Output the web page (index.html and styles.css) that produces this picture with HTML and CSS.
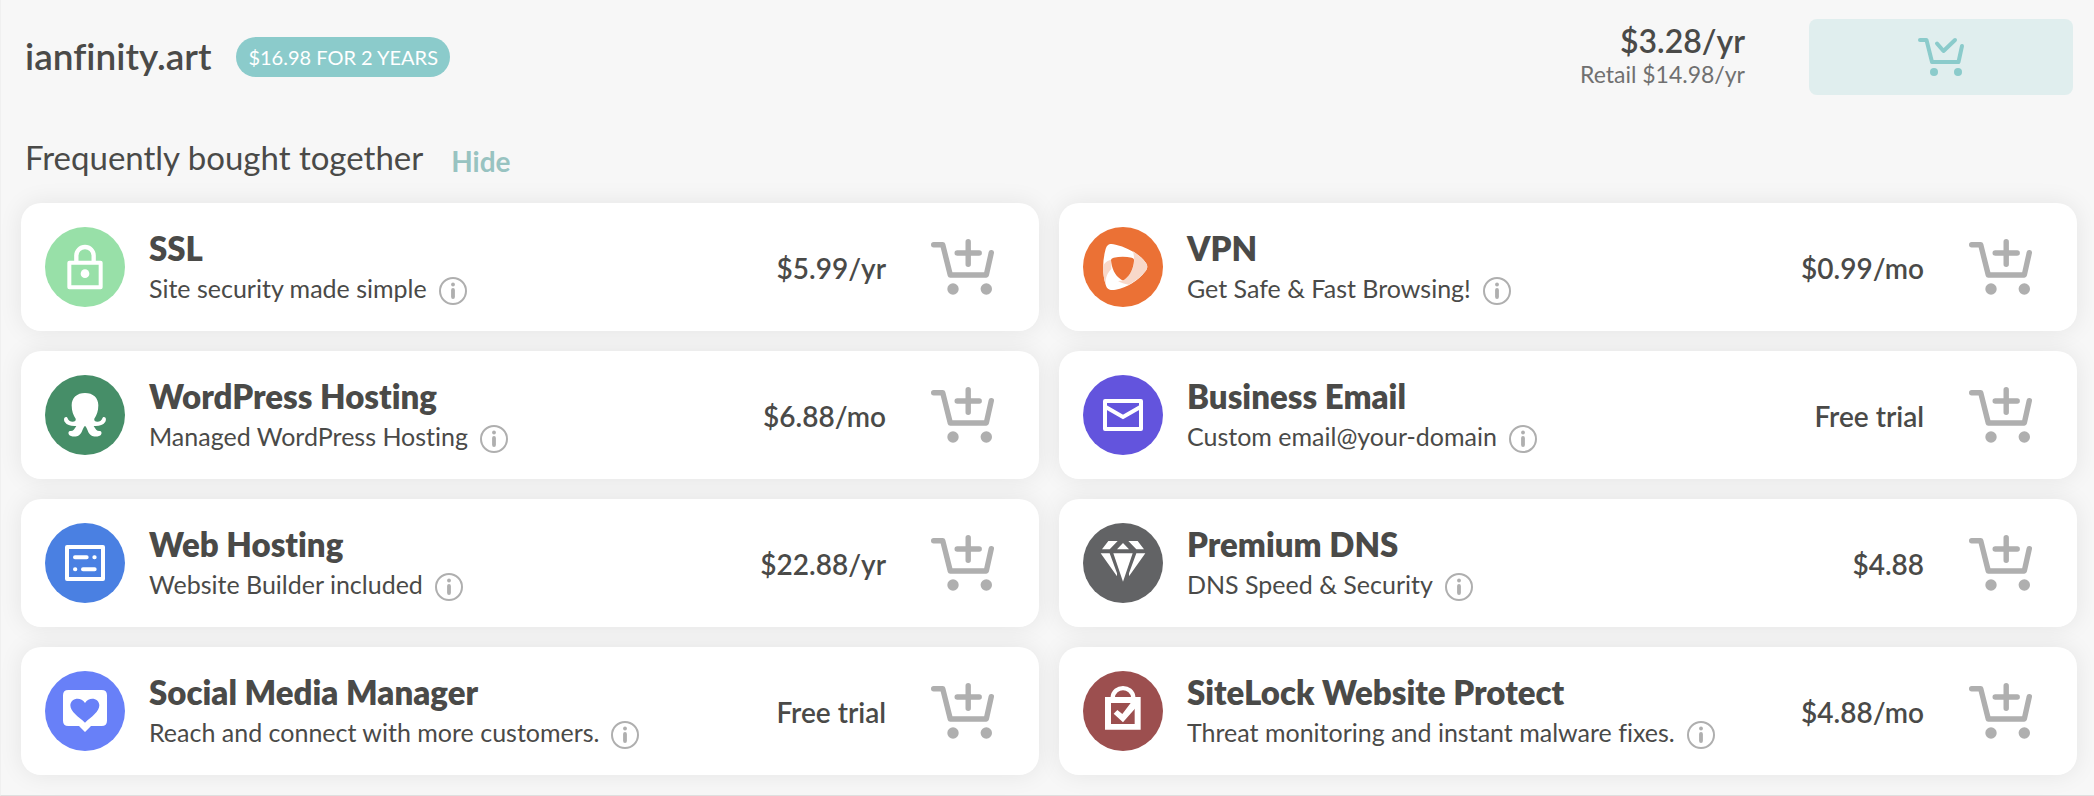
FILE: index.html
```
<!DOCTYPE html>
<html lang="en">
<head>
    <meta charset="UTF-8">
    <meta name="viewport" content="width=device-width, initial-scale=1.0">
    <title>ianfinity.art</title>
    <link rel="stylesheet" href="styles.css">
</head>
<body>
    <!-- Shared icons -->
    <svg class="sprite" aria-hidden="true">
        <symbol id="cart-add" viewBox="0 0 65 58">
            <path d="M3.7 6.7H12.7L20.3 37H56.3L61.3 14.7M38.2 3.7V26.3M27.2 15H49.2" fill="none" stroke="currentColor" stroke-width="5.4" stroke-linecap="round" stroke-linejoin="round"/>
            <circle cx="23" cy="51" r="5.7" fill="currentColor"/>
            <circle cx="56.3" cy="51" r="5.7" fill="currentColor"/>
        </symbol>
        <symbol id="cart-check" viewBox="0 0 50 42">
            <path d="M4 4H10.5L16 26H42.5L46 10M21 7.5L27.5 15L39 4" fill="none" stroke="currentColor" stroke-width="4" stroke-linecap="round" stroke-linejoin="round"/>
            <circle cx="18" cy="36" r="4" fill="currentColor"/>
            <circle cx="42" cy="36" r="4" fill="currentColor"/>
        </symbol>
        <symbol id="info" viewBox="0 0 28 28">
            <circle cx="14" cy="14" r="13" fill="none" stroke="currentColor" stroke-width="2"/>
            <circle cx="14" cy="7.5" r="1.9" fill="currentColor"/>
            <path d="M14 13V20" stroke="currentColor" stroke-width="3.8" stroke-linecap="round"/>
        </symbol>
    </svg>

    <header class="domain">
        <h1 class="domain-name">ianfinity.art</h1>
        <span class="promo">$16.98 FOR 2 YEARS</span>
        <div class="domain-price">
            <strong>$3.28/yr</strong>
            <span>Retail $14.98/yr</span>
        </div>
        <button type="button" class="in-cart" aria-label="In cart"><svg><use href="#cart-check"/></svg></button>
    </header>

    <div class="together">
        <h2>Frequently bought together</h2>
        <a href="#products">Hide</a>
    </div>

    <main class="products" id="products">
        <section class="card">
            <svg class="icon ssl" viewBox="0 0 240 240">
                <rect x="73" y="107" width="94" height="74" fill="none" stroke="#fff" stroke-width="12" stroke-linejoin="round"/>
                <path d="M94 104V86a26 26 0 0 1 52 0V104" fill="none" stroke="#fff" stroke-width="13"/>
                <circle cx="120" cy="140" r="13" fill="#fff"/>
            </svg>
            <div class="info">
                <h3>SSL</h3>
                <p>Site security made simple <button type="button" class="tip" aria-label="About SSL"><svg><use href="#info"/></svg></button></p>
            </div>
            <span class="price">$5.99/yr</span>
            <button type="button" class="add" aria-label="Add SSL"><svg><use href="#cart-add"/></svg></button>
        </section>

        <section class="card">
            <svg class="icon vpn" viewBox="0 0 240 240">
                <path d="M67 70C71 52 80 48 98 53C132 61 166 79 186 104C195 115 195 123 186 134C166 160 132 182 98 188C80 191 72 187 68 173C58 140 58 104 67 70Z" fill="#fff"/>
                <path d="M150 73C164 81 178 94 186 104C195 115 195 123 186 134C173 150 156 163 137 173C124 171 114 168 105 162C116 162 121 161 126 157C155 133 157 102 150 73Z" fill="#f8d8c9"/>
                <path d="M84 98C66 104 61 112 60 121C60 140 63 158 68 172C67 152 73 138 85 126Z" fill="#f8d8c9"/>
                <path d="M84 100C84 95 87 94 92 92C110 88 129 88 146 92C152 94 154 96 153 102C151 125 142 144 126 157C121 161 118 161 113 157C95 145 86 123 84 100Z" fill="#eb7135"/>
            </svg>
            <div class="info">
                <h3>VPN</h3>
                <p>Get Safe &amp; Fast Browsing! <button type="button" class="tip" aria-label="About VPN"><svg><use href="#info"/></svg></button></p>
            </div>
            <span class="price">$0.99/mo</span>
            <button type="button" class="add" aria-label="Add VPN"><svg><use href="#cart-add"/></svg></button>
        </section>

        <section class="card">
            <svg class="icon wordpress" viewBox="0 0 240 240">
                <path d="M120 54C96 54 80 68 80 91C80 109 85 121 92 131C95 141 80 142 73 137C67 133 69 126 63 126C57 126 55 135 60 142C66 151 78 154 94 153C88 163 84 169 76 168C70 168 69 174 72 179C76 185 94 187 103 180C112 173 113 158 120 152C127 158 128 173 137 180C146 187 164 185 168 179C171 174 170 168 164 168C156 169 152 163 146 153C162 154 174 151 180 142C185 135 183 126 177 126C171 126 173 133 167 137C160 142 145 141 148 131C155 121 160 109 160 91C160 68 144 54 120 54Z" fill="#fff"/>
            </svg>
            <div class="info">
                <h3>WordPress Hosting</h3>
                <p>Managed WordPress Hosting <button type="button" class="tip" aria-label="About WordPress Hosting"><svg><use href="#info"/></svg></button></p>
            </div>
            <span class="price">$6.88/mo</span>
            <button type="button" class="add" aria-label="Add WordPress Hosting"><svg><use href="#cart-add"/></svg></button>
        </section>

        <section class="card">
            <svg class="icon email" viewBox="0 0 240 240">
                <rect x="66" y="78" width="108" height="84" fill="none" stroke="#fff" stroke-width="12" stroke-linejoin="round"/>
                <path d="M68 96L120 126L172 96" fill="none" stroke="#fff" stroke-width="12"/>
            </svg>
            <div class="info">
                <h3>Business Email</h3>
                <p>Custom email@your-domain <button type="button" class="tip" aria-label="About Business Email"><svg><use href="#info"/></svg></button></p>
            </div>
            <span class="price">Free trial</span>
            <button type="button" class="add" aria-label="Add Business Email"><svg><use href="#cart-add"/></svg></button>
        </section>

        <section class="card">
            <svg class="icon hosting" viewBox="0 0 240 240">
                <rect x="66" y="72" width="108" height="96" fill="none" stroke="#fff" stroke-width="12" stroke-linejoin="round"/>
                <path d="M90 103H125M148 103H149M90 139H91M114 139H149" stroke="#fff" stroke-width="12" stroke-linecap="round"/>
            </svg>
            <div class="info">
                <h3>Web Hosting</h3>
                <p>Website Builder included <button type="button" class="tip" aria-label="About Web Hosting"><svg><use href="#info"/></svg></button></p>
            </div>
            <span class="price">$22.88/yr</span>
            <button type="button" class="add" aria-label="Add Web Hosting"><svg><use href="#cart-add"/></svg></button>
        </section>

        <section class="card">
            <svg class="icon dns" viewBox="0 0 240 240">
                <path d="M76 54H104L80 79H57ZM120 60L138 79H102ZM136 54H164L183 79H160ZM53 91H80L102 151V160ZM91 91H149L120 176ZM160 91H187L138 160V151Z" fill="#fff"/>
            </svg>
            <div class="info">
                <h3>Premium DNS</h3>
                <p>DNS Speed &amp; Security <button type="button" class="tip" aria-label="About Premium DNS"><svg><use href="#info"/></svg></button></p>
            </div>
            <span class="price">$4.88</span>
            <button type="button" class="add" aria-label="Add Premium DNS"><svg><use href="#cart-add"/></svg></button>
        </section>

        <section class="card">
            <svg class="icon social" viewBox="0 0 240 240">
                <path d="M70 57H170Q186 57 186 73V149Q186 165 170 165H138L120 183L102 165H70Q54 165 54 149V73Q54 57 70 57Z" fill="#fff"/>
                <path d="M120 155C100 137 76 122 76 103C76 83 106 74 120 96C134 74 163 83 163 103C163 122 140 137 120 155Z" fill="#6880f8"/>
            </svg>
            <div class="info">
                <h3>Social Media Manager</h3>
                <p>Reach and connect with more customers. <button type="button" class="tip" aria-label="About Social Media Manager"><svg><use href="#info"/></svg></button></p>
            </div>
            <span class="price">Free trial</span>
            <button type="button" class="add" aria-label="Add Social Media Manager"><svg><use href="#cart-add"/></svg></button>
        </section>

        <section class="card">
            <svg class="icon sitelock" viewBox="0 0 240 240">
                <path d="M66 78H173V176H66ZM84 96V159H155V96Z" fill="#fff" fill-rule="evenodd"/>
                <path d="M89 80C92 42 148 42 151 80" fill="none" stroke="#fff" stroke-width="13"/>
                <path d="M92 128L103 117L118 129L143 96H157V112L120 154Z" fill="#fff"/>
            </svg>
            <div class="info">
                <h3>SiteLock Website Protect</h3>
                <p>Threat monitoring and instant malware fixes. <button type="button" class="tip" aria-label="About SiteLock Website Protect"><svg><use href="#info"/></svg></button></p>
            </div>
            <span class="price">$4.88/mo</span>
            <button type="button" class="add" aria-label="Add SiteLock Website Protect"><svg><use href="#cart-add"/></svg></button>
        </section>
    </main>
</body>
</html>
```
FILE: styles.css
```
* {
    box-sizing: border-box;
}
body {
    margin: 0;
    padding: 19px 17px 20px 20px;
    border-left: 1px solid #f0f0f0;
    border-bottom: 1px solid #dfdfdf;
    background-color: #f7f7f7;
    color: #4a4a48;
    font-family: Lato, "Open Sans", sans-serif;
}
h1, h2, h3, p {
    margin: 0;
}
h1, h3, p {
    font-variant-ligatures: none;
}
button {
    padding: 0;
    border: none;
    background: none;
    cursor: pointer;
}
button svg {
    display: block;
}
.sprite {
    display: none;
}

/* Domain row */
.domain {
    display: flex;
    align-items: center;
    padding: 0 4px;
}
.domain-name {
    padding-bottom: 2px;
    font-size: 37px;
    font-weight: 600;
    line-height: 44px;
}
.promo {
    margin-left: 25px;
    padding: 0 12px;
    border-radius: 20px;
    background-color: #8bcbcb;
    color: white;
    font-size: 20px;
    line-height: 40px;
}
.domain-price {
    display: flex;
    flex-direction: column;
    margin-left: auto;
    text-align: right;
}
.domain-price strong {
    font-size: 32px;
    font-weight: 600;
    line-height: 34px;
}
.domain-price span {
    color: #707070;
    font-size: 23px;
    line-height: 32px;
}
.in-cart {
    display: flex;
    align-items: center;
    justify-content: center;
    width: 264px;
    height: 76px;
    margin-left: 64px;
    border-radius: 8px;
    background-color: #e0eeee;
    color: #8bcbcb;
}
.in-cart svg {
    width: 50px;
    height: 42px;
}

.together {
    display: flex;
    align-items: flex-end;
    gap: 28px;
    margin: 40px 0 24px;
    padding: 0 4px;
}
.together h2 {
    font-size: 33px;
    font-weight: 400;
    line-height: 44px;
}
.together a {
    color: #98c3c1;
    font-size: 28px;
    font-weight: 700;
    line-height: 36px;
    text-decoration: none;
}

/* Product cards */
.products {
    display: grid;
    grid-template-columns: 1fr 1fr;
    gap: 20px;
}
.card {
    display: flex;
    align-items: center;
    padding: 24px 44px 24px 24px;
    border-radius: 20px;
    background-color: white;
    box-shadow: 0 0 24px rgba(0, 0, 0, 0.08);
}
.icon {
    width: 80px;
    height: 80px;
    border-radius: 50%;
}
.ssl { background-color: #98e0a8; }
.vpn { background-color: #eb7135; }
.wordpress { background-color: #468e68; }
.email { background-color: #6354dd; }
.hosting { background-color: #4a80e2; }
.dns { background-color: #626365; }
.social { background-color: #6880f8; }
.sitelock { background-color: #9c4f4f; }

.info {
    flex: 1;
    margin: 2px 0 -2px 24px;
}
.info h3 {
    font-size: 33px;
    font-weight: 800;
    line-height: 38px;
}
.info p {
    display: flex;
    align-items: flex-end;
    gap: 12px;
    font-size: 25px;
    line-height: 42px;
}
.tip {
    margin-bottom: 4px;
    color: #afafaf;
}
.tip svg {
    width: 28px;
    height: 28px;
}
.price {
    padding-top: 2px;
    font-size: 28px;
    font-weight: 600;
}
.add {
    margin-left: 44px;
    color: #afafaf;
}
.add svg {
    width: 65px;
    height: 58px;
}
```
